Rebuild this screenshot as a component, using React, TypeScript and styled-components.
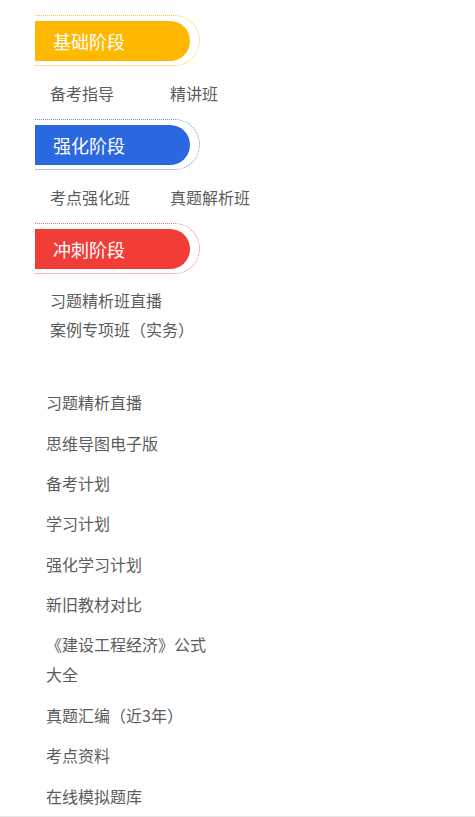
import React from 'react';
import styled, { createGlobalStyle } from 'styled-components';

const GlobalStyle = createGlobalStyle`
  html, body {
    margin: 0;
    padding: 0;
    background: #fff;
  }
  body {
    font-family: "Noto Sans CJK SC", "Noto Sans", sans-serif;
  }
`;

const STAGES = [
  { title: '基础阶段', color: '#ffb800', ring: '#ffc633', items: ['备考指导', '精讲班'], stacked: false },
  { title: '强化阶段', color: '#2a68e0', ring: '#5d8de8', items: ['考点强化班', '真题解析班'], stacked: false },
  { title: '冲刺阶段', color: '#f23c38', ring: '#f2716e', items: ['习题精析班直播', '案例专项班（实务）'], stacked: true },
];

const LINKS = [
  '习题精析直播',
  '思维导图电子版',
  '备考计划',
  '学习计划',
  '强化学习计划',
  '新旧教材对比',
  '《建设工程经济》公式大全',
  '真题汇编（近3年）',
  '考点资料',
  '在线模拟题库',
];

const Page = styled.div`
  padding: 15px 0 0 35px;
  border-bottom: 1px solid #e6e6e6;
  box-sizing: border-box;
`;

const StageHeader = styled.div<{ $ring: string }>`
  width: 165px;
  box-sizing: border-box;
  padding: 5px 9px 4px 0;
  border: 1px dotted ${(p) => p.$ring};
  border-left: none;
  border-radius: 0 27px 27px 0;
`;

const Pill = styled.div<{ $color: string }>`
  height: 40px;
  line-height: 40px;
  padding-left: 18px;
  background: ${(p) => p.$color};
  border-radius: 0 20px 20px 0;
  color: #fff;
  font-size: 18px;
`;

const SubList = styled.div<{ $stacked: boolean }>`
  display: ${(p) => (p.$stacked ? 'flex' : 'grid')};
  flex-direction: column;
  grid-template-columns: 120px auto;
  padding: 12px 0 11px 15px;
`;

const SubItem = styled.a<{ $stacked: boolean }>`
  font-size: 16px;
  line-height: ${(p) => (p.$stacked ? '29px' : '30px')};
  color: #5c5c5c;
  text-decoration: none;
  white-space: nowrap;
`;

const LinkList = styled.ul`
  list-style: none;
  margin: 0;
  padding: 27px 0 0 11px;
  width: 172px;
`;

const LinkItem = styled.li`
  font-size: 16px;
  line-height: 30px;
  padding: 5.2px 0;
  color: #5c5c5c;
`;

export default function App() {
  return (
    <>
      <GlobalStyle />
      <Page>
        {STAGES.map((s) => (
          <section key={s.title}>
            <StageHeader $ring={s.ring}>
              <Pill $color={s.color}>{s.title}</Pill>
            </StageHeader>
            <SubList $stacked={s.stacked}>
              {s.items.map((it) => (
                <SubItem key={it} $stacked={s.stacked}>
                  {it}
                </SubItem>
              ))}
            </SubList>
          </section>
        ))}
        <LinkList>
          {LINKS.map((l) => (
            <LinkItem key={l}>{l}</LinkItem>
          ))}
        </LinkList>
      </Page>
    </>
  );
}
